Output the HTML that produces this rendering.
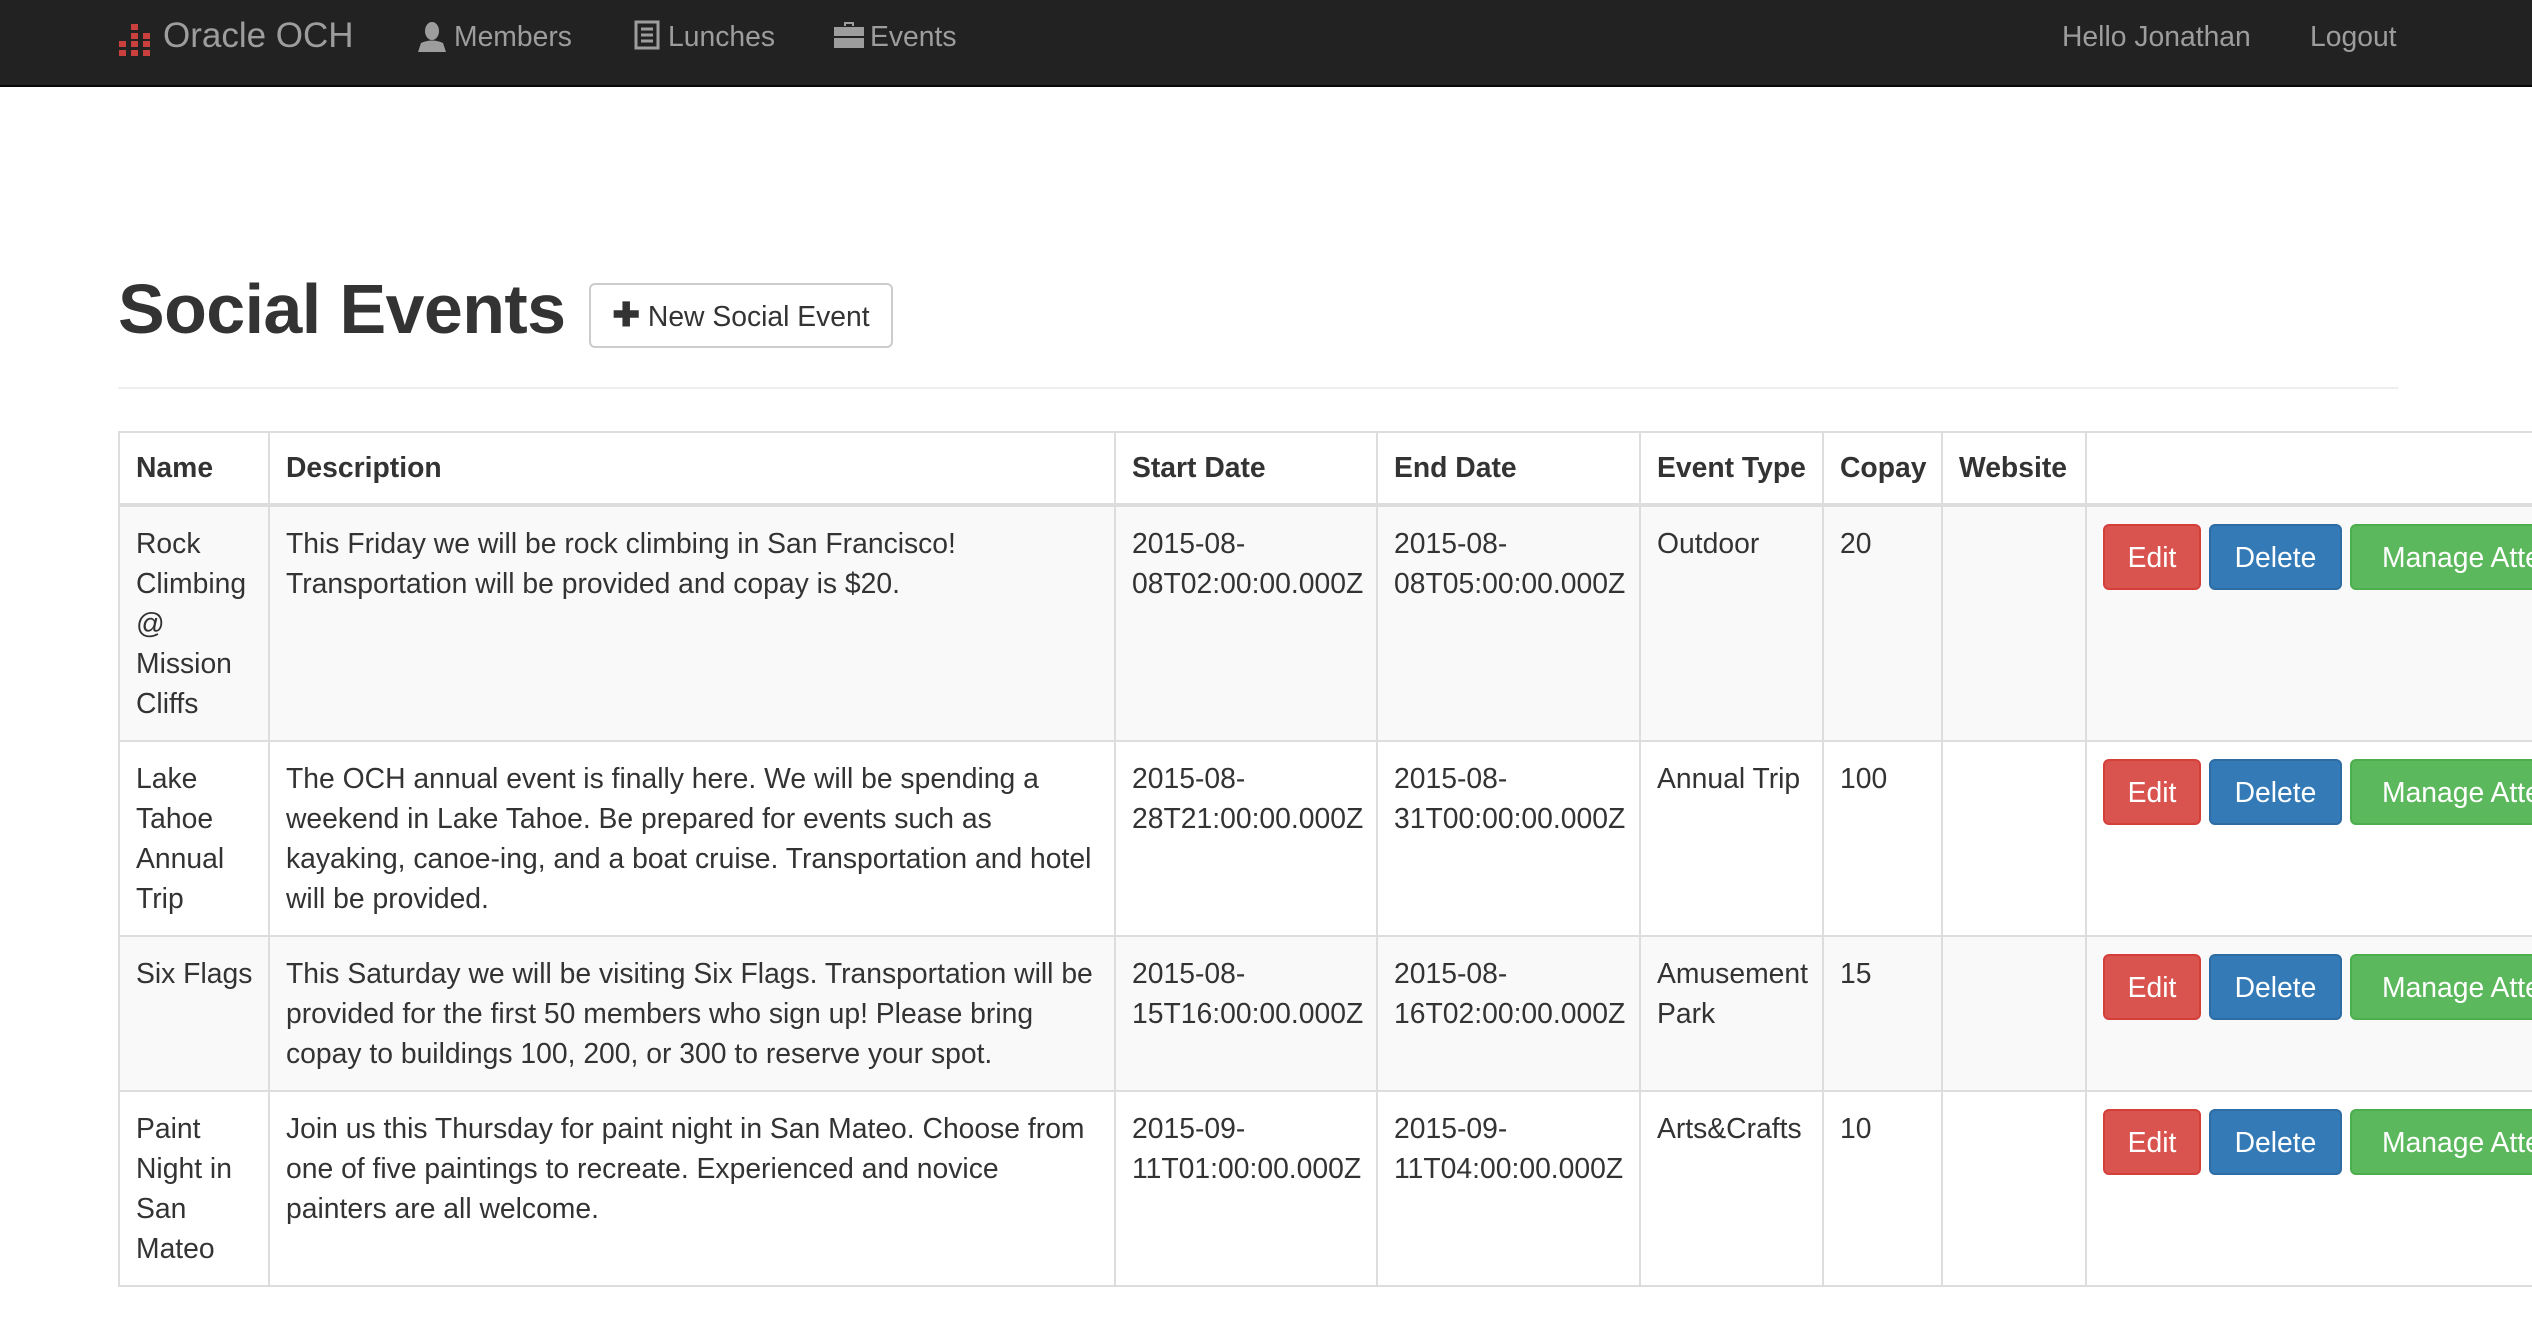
<!DOCTYPE html>
<html><head><meta charset="utf-8"><style>
*{box-sizing:border-box}
body{margin:0;width:2532px;height:1320px;overflow:hidden;background:#fff;font-family:"Liberation Sans",sans-serif;color:#333;font-size:28.3px}
.nav{position:absolute;left:0;top:0;width:2532px;height:87px;background:#222;border-bottom:2px solid #080808;color:#9d9d9d}
.nav span{position:absolute;top:0;line-height:72px;font-size:28.3px;white-space:nowrap}
.nav svg{position:absolute}
h1{position:absolute;left:118px;top:264px;margin:0;font-size:70px;font-weight:bold;line-height:90px;letter-spacing:-0.6px}
.btn{position:absolute;border-radius:6px;color:#fff;font-size:28.3px;text-align:center;line-height:62px;white-space:nowrap}
.new{left:589px;top:283px;width:304px;height:65px;border:2px solid #ccc;color:#333;background:#fff;line-height:60px}
hr{position:absolute;left:118px;top:387px;width:2280px;margin:0;border:0;border-top:2px solid #eee}
table{position:absolute;left:118px;top:431px;border-collapse:collapse;table-layout:fixed;width:2700px}
td,th{border:2px solid #ddd;padding:16px 16px 17px;vertical-align:top;text-align:left;line-height:40px;font-size:28.3px}
td:first-child{padding-right:6px}
th{border-bottom:4px solid #ddd;padding:14px 16px 16px;white-space:nowrap}
tr.s td{background:#f9f9f9}
.ed{background:#d9534f;border:2px solid #d43f3a;width:98px;height:66px}
.de{background:#337ab7;border:2px solid #2e6da4;width:133px;height:66px}
.ma{background:#5cb85c;border:2px solid #4cae4c;width:300px;height:66px}
td.a{position:relative}
</style></head><body>
<div class="nav">
<svg style="left:118px;top:24px" width="34" height="32" viewBox="0 0 34 32" fill="#c9403c"><rect x="13" y="0" width="7" height="6"/><rect x="13" y="9" width="7" height="6"/><rect x="25" y="9" width="7" height="6"/><rect x="1" y="17" width="7" height="6"/><rect x="13" y="17" width="7" height="6"/><rect x="25" y="17" width="7" height="6"/><rect x="1" y="26" width="7" height="6"/><rect x="13" y="26" width="7" height="6"/><rect x="25" y="26" width="7" height="6"/></svg>
<span style="left:163px;font-size:35px">Oracle OCH</span>
<svg style="left:418px;top:22px" width="28" height="30" viewBox="0 0 28 30" fill="#9d9d9d"><ellipse cx="14" cy="9" rx="7" ry="9"/><path d="M0 30 L3 21 Q14 16 25 21 L28 30Z"/></svg>
<span style="left:454px">Members</span>
<svg style="left:634px;top:20px" width="26" height="30" viewBox="0 0 26 30" fill="none" stroke="#9d9d9d" stroke-width="3"><rect x="2" y="2" width="22" height="26"/><path d="M7 9h12M7 15h12M7 21h12"/></svg>
<span style="left:668px">Lunches</span>
<svg style="left:834px;top:20px" width="30" height="28" viewBox="0 0 30 28" fill="#9d9d9d"><path d="M10 6V2h10v4h-2V4h-6v2z"/><rect x="0" y="7" width="30" height="9"/><rect x="0" y="18" width="30" height="10"/></svg>
<span style="left:870px">Events</span>
<span style="left:2062px">Hello Jonathan</span>
<span style="left:2310px">Logout</span>
</div>
<h1>Social Events</h1>
<div class="btn new"><b style="font-size:33px">✚</b> New Social Event</div>
<hr>
<table>
<colgroup><col style="width:150px"><col style="width:846px"><col style="width:262px"><col style="width:263px"><col style="width:183px"><col style="width:119px"><col style="width:144px"><col></colgroup>
<tr><th>Name</th><th>Description</th><th>Start Date</th><th>End Date</th><th>Event Type</th><th>Copay</th><th>Website</th><th></th></tr>
<tr class="s" style="height:234px"><td>Rock Climbing @ Mission Cliffs</td><td>This Friday we will be rock climbing in San Francisco! Transportation will be provided and copay is $20.</td><td>2015-08-08T02:00:00.000Z</td><td>2015-08-08T05:00:00.000Z</td><td>Outdoor</td><td>20</td><td></td><td class="a"><div class="btn ed" style="left:16px;top:17px">Edit</div><div class="btn de" style="left:122px;top:17px">Delete</div><div class="btn ma" style="left:263px;top:17px">Manage Attendees</div></td></tr>
<tr style="height:194px"><td>Lake Tahoe Annual Trip</td><td>The OCH annual event is finally here. We will be spending a weekend in Lake Tahoe. Be prepared for events such as kayaking, canoe-ing, and a boat cruise. Transportation and hotel will be provided.</td><td>2015-08-28T21:00:00.000Z</td><td>2015-08-31T00:00:00.000Z</td><td>Annual Trip</td><td>100</td><td></td><td class="a"><div class="btn ed" style="left:16px;top:17px">Edit</div><div class="btn de" style="left:122px;top:17px">Delete</div><div class="btn ma" style="left:263px;top:17px">Manage Attendees</div></td></tr>
<tr class="s" style="height:153px"><td style="white-space:nowrap">Six Flags</td><td>This Saturday we will be visiting Six Flags. Transportation will be provided for the first 50 members who sign up! Please bring copay to buildings 100, 200, or 300 to reserve your spot.</td><td>2015-08-15T16:00:00.000Z</td><td>2015-08-16T02:00:00.000Z</td><td>Amusement Park</td><td>15</td><td></td><td class="a"><div class="btn ed" style="left:16px;top:17px">Edit</div><div class="btn de" style="left:122px;top:17px">Delete</div><div class="btn ma" style="left:263px;top:17px">Manage Attendees</div></td></tr>
<tr style="height:194px"><td>Paint Night in San Mateo</td><td>Join us this Thursday for paint night in San Mateo. Choose from one of five paintings to recreate. Experienced and novice painters are all welcome.</td><td>2015-09-11T01:00:00.000Z</td><td>2015-09-11T04:00:00.000Z</td><td>Arts&amp;Crafts</td><td>10</td><td></td><td class="a"><div class="btn ed" style="left:16px;top:17px">Edit</div><div class="btn de" style="left:122px;top:17px">Delete</div><div class="btn ma" style="left:263px;top:17px">Manage Attendees</div></td></tr>
</table>
</body></html>
